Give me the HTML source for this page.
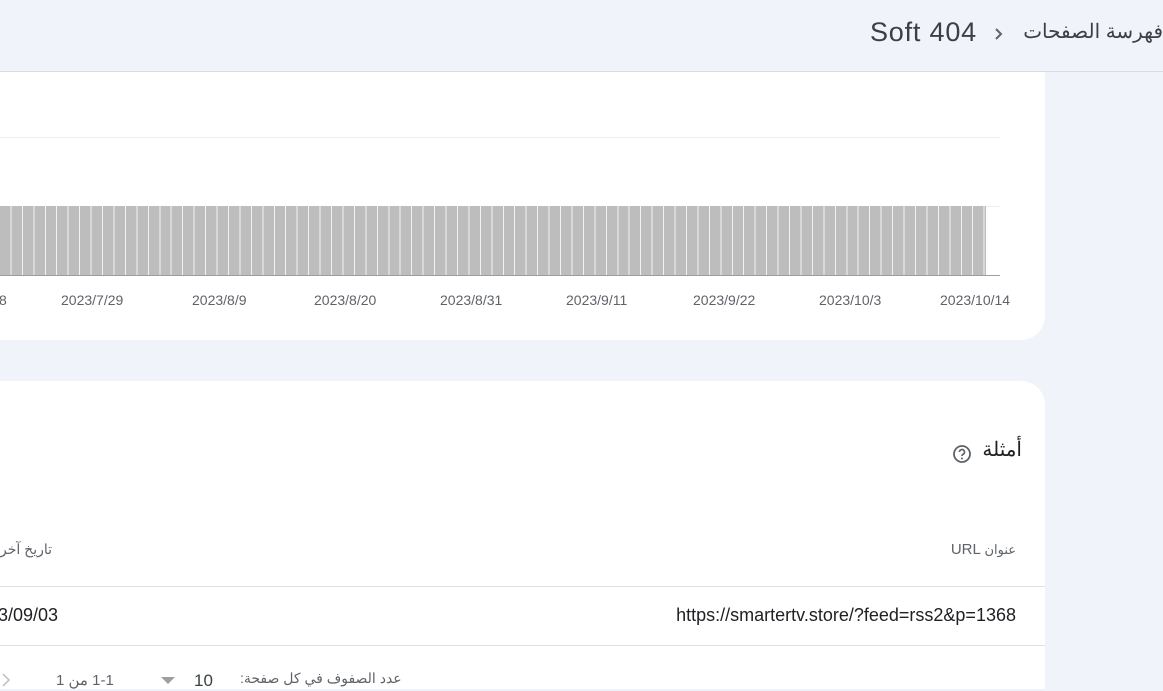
<!DOCTYPE html>
<html><head><meta charset="utf-8"><style>
body{margin:0;width:1163px;height:689px;overflow:hidden;background:#f0f3fa;font-family:"Liberation Sans","Noto Sans CJK SC",sans-serif;position:relative}
.hdr{position:absolute;left:0;top:0;width:1163px;height:71px;border-bottom:1px solid #dadce0;background:#f0f3fa}
.t{position:absolute;white-space:nowrap}
.card1{position:absolute;left:0;top:72px;width:1045px;height:268px;background:#fff;border-bottom-right-radius:24px}
.card2{position:absolute;left:0;top:381px;width:1045px;height:308px;background:#fff;border-top-right-radius:24px}
.bars{position:absolute;left:0;top:206px;width:986px;height:69px;background:repeating-linear-gradient(to right,#bdbdbd 0,#bdbdbd 10.45px,#f2f2f2 10.45px,#f2f2f2 11.45px)}
.lbl{position:absolute;top:292px;font-size:14px;color:#5f6368}
</style></head><body>
<div class="hdr"></div>
<div class="t" style="right:0;top:19px;font-size:20px;color:#3c4043;direction:rtl">فهرسة الصفحات</div>
<svg class="t" style="left:991px;top:25px" width="16" height="18" viewBox="0 0 16 18"><path d="M5 4l5 5-5 5" fill="none" stroke="#5f6368" stroke-width="2"/></svg>
<div class="t" style="left:870px;top:17px;font-size:27px;color:#3c4043;letter-spacing:0.8px">Soft 404</div>
<div class="card1"></div>
<div style="position:absolute;left:0;top:137px;width:1000px;height:1px;background:#eee"></div>
<div style="position:absolute;left:0;top:206px;width:1000px;height:1px;background:#eee"></div>
<div class="bars"></div>
<div style="position:absolute;left:0;top:275px;width:1000px;height:1px;background:#9e9e9e"></div>
<div class="lbl" style="left:-1px">8</div>
<div class="lbl" style="left:61px">2023/7/29</div>
<div class="lbl" style="left:192px">2023/8/9</div>
<div class="lbl" style="left:314px">2023/8/20</div>
<div class="lbl" style="left:440px">2023/8/31</div>
<div class="lbl" style="left:566px">2023/9/11</div>
<div class="lbl" style="left:693px">2023/9/22</div>
<div class="lbl" style="left:819px">2023/10/3</div>
<div class="lbl" style="left:940px">2023/10/14</div>
<div class="card2"></div>
<div class="t" style="right:141px;top:437px;font-size:20px;color:#202124;direction:rtl">أمثلة</div>
<svg class="t" style="left:952px;top:444px" width="20" height="20" viewBox="0 0 20 20"><circle cx="10" cy="10" r="8" fill="none" stroke="#5f6368" stroke-width="1.8"/><path d="M7.5 8a2.5 2.5 0 1 1 3.5 2.3c-.7.4-1 .8-1 1.7" fill="none" stroke="#5f6368" stroke-width="1.7"/><circle cx="10" cy="14.5" r="1" fill="#5f6368"/></svg>
<div class="t" style="right:147px;top:541px;font-size:13px;color:#5f6368;direction:rtl">عنوان <span style="font-size:15px">URL</span></div>
<div class="t" style="left:0;top:541px;font-size:14px;color:#5f6368;direction:rtl">تاريخ آخر</div>
<div style="position:absolute;left:0;top:586px;width:1045px;height:1px;background:#e0e0e0"></div>
<div class="t" style="right:147px;top:605px;font-size:18px;color:#202124">https://smartertv.store/?feed=rss2&amp;p=1368</div>
<div class="t" style="left:-2px;top:605px;font-size:18px;color:#202124">3/09/03</div>
<div style="position:absolute;left:0;top:645px;width:1045px;height:1px;background:#e0e0e0"></div>
<div class="t" style="left:240px;top:670px;font-size:14px;color:#5f6368;direction:rtl">عدد الصفوف في كل صفحة:</div>
<div class="t" style="left:194px;top:671px;font-size:17px;color:#3c4043">10</div>
<div style="position:absolute;left:161px;top:677px;width:0;height:0;border-left:7px solid transparent;border-right:7px solid transparent;border-top:7px solid #9e9e9e"></div>
<div class="t" style="left:56px;top:671px;width:60px;font-size:15px;color:#5f6368;direction:rtl;text-align:left">1-1 من 1</div>
<svg class="t" style="left:0;top:671px" width="12" height="18"><path d="M3 3l6 6-6 6" fill="none" stroke="#bdbdbd" stroke-width="1.5"/></svg>
</body></html>
